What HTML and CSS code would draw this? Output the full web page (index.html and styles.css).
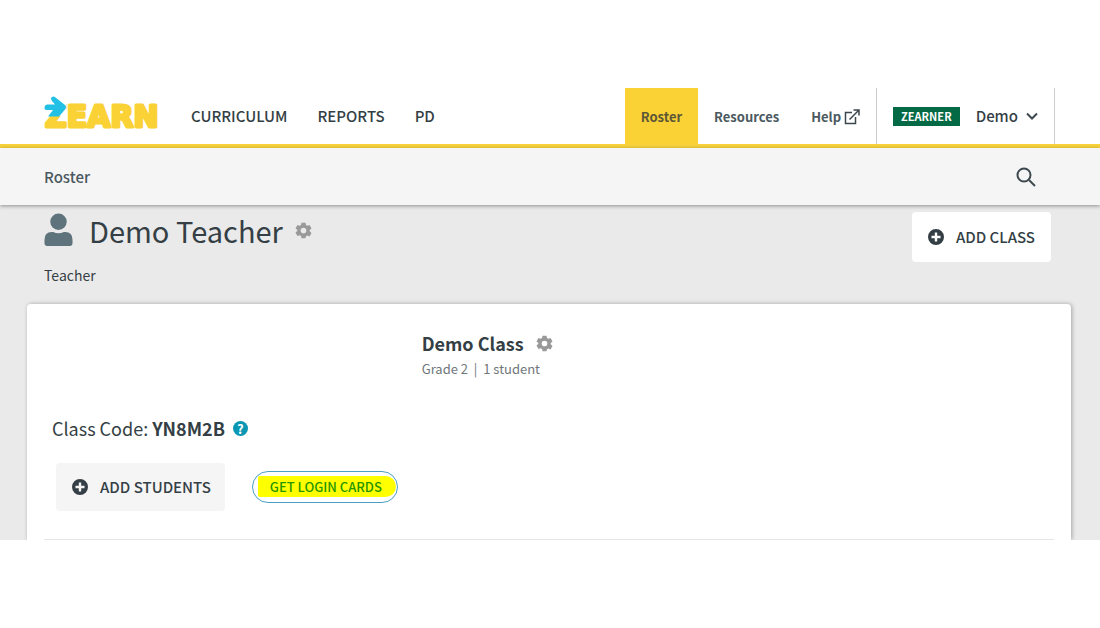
FILE: index.html
```html
<!DOCTYPE html>
<html lang="en">
<head>
  <meta charset="UTF-8" />
  <meta name="viewport" content="width=device-width, initial-scale=1.0"/>
  <title>Roster | Zearn</title>
  <link rel="stylesheet" href="styles.css">
</head>
<body>
  <!-- Shared icon shapes -->
  <svg class="sprite" aria-hidden="true">
    <symbol id="icon-gear" viewBox="0 0 24 24">
      <path fill-rule="evenodd" d="M9.2 1h5.6l.7 3.3 1.8 1 3.2-1.1 2.8 4.9-2.500 2.200v1.900l2.500 2.200-2.800 4.900-3.200-1.100-1.800 1L14.800 23H9.200l-.7-3.300-1.800-1-3.200 1.100L.7 14.900l2.500-2.200v-1.900L.7 9.100l2.800-4.900 3.200 1.100 1.800-1zM12 8a4 4 0 1 0 0 8 4 4 0 0 0 0-8z"/>
    </symbol>
    <symbol id="icon-plus" viewBox="0 0 16 16">
      <path fill-rule="evenodd" d="M8 0a8 8 0 1 0 0 16A8 8 0 0 0 8 0zM6.800 3.500h2.400v3.300h3.300v2.400H9.200v3.300H6.800V9.200H3.500V6.800h3.300z"/>
    </symbol>
  </svg>

  <div class="app">
    <header class="navbar">
      <a href="#" class="logo" aria-label="Zearn">
        <svg width="120" height="44" viewBox="0 0 120 44">
          <text class="logo-text" x="2" y="31">ZEARN</text>
          <path class="logo-gap" d="M0 5h23v15H0z"/>
          <path class="logo-arrow" d="M4 8.500H12L9 5Q7 2 9 1Q10.500 0 12.500 1.500L22 9Q24 11 22 13.500L16 20.500H5L10 14H4Q1 14 1.500 11.500Q1.500 9 4 8.500z"/>
        </svg>
      </a>
      <nav class="main-nav">
        <a href="#">CURRICULUM</a>
        <a href="#">REPORTS</a>
        <a href="#">PD</a>
      </nav>
      <nav class="side-nav">
        <a href="#" class="active">Roster</a>
        <a href="#">Resources</a>
        <a href="#">Help
          <svg class="icon-external" width="16" height="16" viewBox="0 0 16 16" aria-hidden="true">
            <path d="M8 3.500H1.500v11h10V8M9.500 1H15v5.500M14.500 1.500L5.500 10.500"/>
          </svg>
        </a>
      </nav>
      <div class="account">
        <span class="badge">ZEARNER</span>
        <button type="button" class="account-menu">Demo
          <svg width="12" height="8" viewBox="0 0 12 8" aria-hidden="true"><path d="M1 1.500l5 5 5-5"/></svg>
        </button>
      </div>
    </header>

    <div class="subbar">
      <span>Roster</span>
      <button type="button" class="search-button" aria-label="Search">
        <svg width="20" height="20" viewBox="0 0 20 20" aria-hidden="true"><circle cx="8" cy="8" r="6.500"/><path d="M13 13l6 6"/></svg>
      </button>
    </div>

    <main>
      <div class="teacher">
        <div>
          <div class="teacher-name">
            <svg class="icon-user" width="29" height="34" viewBox="0 0 30 34" aria-hidden="true">
              <circle cx="15" cy="8.500" r="8.500"/>
              <path d="M8 19h1.500q5.500 2.500 11 0H22q7.500 0 7.500 8v4q0 2.500-2.500 2.500H3Q.5 33.500.5 31v-4Q.5 19 8 19z"/>
            </svg>
            <h1>Demo Teacher</h1>
            <button type="button" class="gear" aria-label="Teacher settings"><svg width="17" height="17"><use href="#icon-gear"/></svg></button>
          </div>
          <p class="role">Teacher</p>
        </div>
        <button type="button" class="add-button add-class">
          <svg width="16" height="16" aria-hidden="true"><use href="#icon-plus"/></svg>ADD CLASS
        </button>
      </div>

      <section class="card">
        <div class="class-info">
          <div class="class-name">
            <h2>Demo Class</h2>
            <button type="button" class="gear" aria-label="Class settings"><svg width="17" height="17"><use href="#icon-gear"/></svg></button>
          </div>
          <p>Grade 2 &nbsp;|&nbsp; 1 student</p>
        </div>
        <div class="class-code">
          <span>Class Code: <strong>YN8M2B</strong></span>
          <button type="button" class="help-button" aria-label="About class codes">?</button>
        </div>
        <div class="actions">
          <button type="button" class="add-button add-students">
            <svg width="16" height="16" aria-hidden="true"><use href="#icon-plus"/></svg>ADD STUDENTS
          </button>
          <button type="button" class="login-cards"><span>GET LOGIN CARDS</span></button>
        </div>
        <hr>
      </section>
    </main>
  </div>
</body>
</html>
```
FILE: styles.css
```css
/* General page styles */
* {
  box-sizing: border-box;
}
body {
  margin: 0;
  padding: 88px 0;
  background: #fff;
  color: #343f45;
  font-family: "Noto Sans CJK SC", "Noto Sans", sans-serif;
  font-size: 14px;
  line-height: 20px;
}
h1, h2, p {
  margin: 0;
}
a {
  color: inherit;
  text-decoration: none;
}
button {
  padding: 0;
  border: none;
  background: none;
  color: inherit;
  font: inherit;
  cursor: pointer;
}
svg {
  display: block;
  flex: none;
}
.sprite {
  position: absolute;
  width: 0;
  height: 0;
}
/* Top navigation */
.navbar {
  display: flex;
  align-items: stretch;
  height: 60px;
  padding: 0 45px 0 43px;
  border-bottom: 4px solid #f9d33c;
}
.logo {
  padding-top: 8px;
}
.logo-text {
  fill: #fad235;
  stroke: #fad235;
  stroke-width: 3px;
  stroke-linejoin: round;
  font-family: "DejaVu Sans", sans-serif;
  font-size: 30px;
  font-weight: 700;
}
.logo-gap {
  fill: #fff;
}
.logo-arrow {
  fill: #22c0e4;
}
.main-nav {
  display: flex;
  align-items: center;
  gap: 30px;
  margin-left: 28px;
  font-size: 15px;
  font-weight: 500;
}
.side-nav {
  display: flex;
  margin-left: auto;
  color: #4b5960;
  font-size: 13px;
  font-weight: 700;
}
.side-nav a {
  display: flex;
  align-items: center;
  gap: 3px;
  padding: 1px 16px 0;
}
.side-nav .active {
  background: #fad235;
  color: #5d5736;
}
.icon-external,
.account-menu svg,
.search-button svg {
  fill: none;
  stroke: #3d484e;
  stroke-width: 2px;
}
.icon-external {
  stroke-width: 1.5px;
}
.account {
  display: flex;
  align-items: center;
  gap: 16px;
  padding: 0 16px;
  border-left: 1px solid #ccc;
  border-right: 1px solid #ccc;
}
.badge {
  padding: 0 8px;
  background: #046a45;
  color: #fff;
  font-size: 11px;
  font-weight: 700;
  line-height: 19px;
}
.account-menu {
  display: flex;
  align-items: center;
  gap: 8px;
  font-size: 15px;
  font-weight: 500;
}
/* Breadcrumb bar */
.subbar {
  position: relative;
  display: flex;
  align-items: center;
  justify-content: space-between;
  height: 57px;
  padding: 0 64px 0 44px;
  background: #f5f5f5;
  box-shadow: 0 1px 4px rgba(0, 0, 0, 0.4);
  color: #4b5960;
  font-size: 15px;
  font-weight: 500;
}
/* Teacher header */
main {
  padding: 7px 29px 0 27px;
  background: #eaeaea;
  overflow: hidden;
}
.teacher {
  display: flex;
  align-items: flex-start;
  justify-content: space-between;
  padding: 0 20px 0 17px;
}
.teacher-name {
  display: flex;
  align-items: center;
  height: 36px;
}
.teacher-name h1 {
  margin: 0 12px 0 16px;
  font-size: 29px;
  font-weight: 400;
  line-height: 36px;
}
.icon-user {
  fill: #5f737d;
}
.gear {
  fill: #999;
}
.role {
  margin: 17px 0 19px;
}
.add-button {
  display: flex;
  align-items: center;
  gap: 12px;
  height: 48px;
  padding: 0 16px;
  border-radius: 4px;
  fill: #343f45;
  font-size: 15px;
  font-weight: 500;
}
.add-class {
  height: 50px;
  background: #fff;
}
/* Class card */
.card {
  padding: 24px 17px 0;
  border-radius: 4px 4px 0 0;
  background: #fff;
  box-shadow: 1px 0 4px rgba(0, 0, 0, 0.3);
}
.class-info {
  margin-left: 37%;
  padding-left: 4px;
  color: #6f777b;
  font-size: 13px;
}
.class-name {
  display: flex;
  align-items: center;
  gap: 12px;
  color: #343f45;
}
.class-name h2 {
  font-size: 18px;
  font-weight: 700;
  line-height: 31px;
}
.class-code {
  display: flex;
  align-items: center;
  gap: 8px;
  margin: 35px 8px 21px;
  font-size: 18px;
  line-height: 28px;
}
.help-button {
  width: 15px;
  height: 15px;
  border-radius: 50%;
  background: #0997b3;
  color: #fff;
  font-size: 13px;
  font-weight: 700;
  line-height: 15px;
}
.actions {
  display: flex;
  align-items: center;
  gap: 27px;
  margin: 0 12px 28px;
}
.add-students {
  padding-right: 14px;
  background: #f5f5f5;
}
.login-cards {
  padding: 4px 1px 5px 5px;
  border: 1px solid #4a9fc4;
  border-radius: 16px;
  color: #279600;
  font-size: 13px;
  font-weight: 500;
}
.login-cards span {
  display: block;
  padding: 1px 14px 0 12px;
  border-radius: 2px 12px 12px 2px;
  background: #ff0;
}
hr {
  margin: 0;
  border: none;
  border-top: 1px solid #e6e6e6;
}
```
